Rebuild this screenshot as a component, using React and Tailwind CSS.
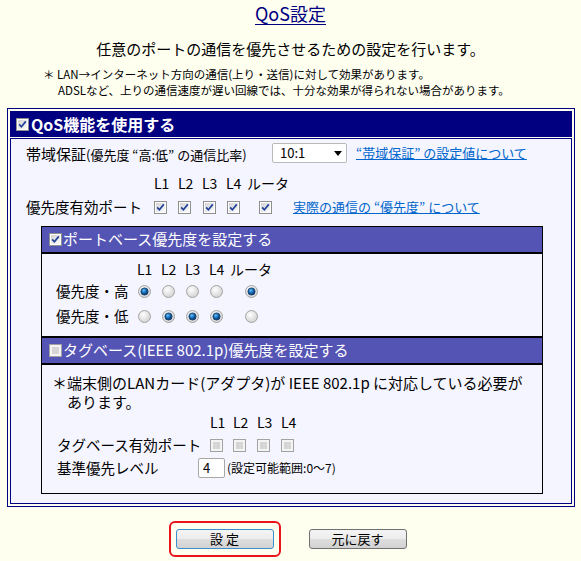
import React from 'react';

const Check = ({ on = true }) => (
  <svg width="13" height="13" viewBox="0 0 13 13" className="block shrink-0">
    <defs>
      <linearGradient id="cbBg" x1="0" y1="0" x2="1" y2="1">
        <stop offset="0" stopColor="#d2d2d2" />
        <stop offset="1" stopColor="#fcfcfc" />
      </linearGradient>
    </defs>
    <rect x="0.5" y="0.5" width="12" height="12" fill="#ffffff" stroke="#8e8f8f" />
    <rect x="2" y="2" width="9" height="9" fill="url(#cbBg)" />
    {on && <path d="M3.2 6.4 L5.4 8.8 L9.8 3.4" fill="none" stroke="#21409a" strokeWidth="1.7" />}
  </svg>
);

const OffCheck = () => (
  <svg width="13" height="13" viewBox="0 0 13 13" className="block shrink-0">
    <rect x="0.5" y="0.5" width="12" height="12" fill="#f4f4f4" stroke="#a2a2a2" />
    <rect x="3" y="3" width="7" height="7" fill="#d6d6d6" />
  </svg>
);

const Radio = ({ on }) => (
  <svg width="13" height="13" viewBox="0 0 13 13" className="block shrink-0">
    <defs>
      <radialGradient id="rBg" cx="0.4" cy="0.35" r="0.7">
        <stop offset="0" stopColor="#ffffff" />
        <stop offset="1" stopColor="#cfcfcf" />
      </radialGradient>
      <radialGradient id="rDot" cx="0.4" cy="0.35" r="0.7">
        <stop offset="0" stopColor="#6cc0f4" />
        <stop offset="0.5" stopColor="#1168b4" />
        <stop offset="1" stopColor="#0b2c58" />
      </radialGradient>
    </defs>
    <circle cx="6.5" cy="6.5" r="6" fill="url(#rBg)" stroke="#a4a4a4" />
    {on && <circle cx="6.5" cy="6.5" r="3.6" fill="url(#rDot)" stroke="#123a66" strokeWidth="0.8" />}
  </svg>
);

const PurpleBar = ({ on, children, className }) => (
  <div className={`flex items-center gap-[1px] bg-[#5454b4] pl-[7px] text-[15px] text-white ${className}`}>
    {on ? <Check /> : <OffCheck />}
    <span className="whitespace-nowrap">{children}</span>
  </div>
);

export default function App() {
  return (
    <div className="min-h-[561px] bg-[#fffff0] font-['Noto_Sans_CJK_JP',sans-serif] text-black">
      <div className="pt-[1px] text-center">
        <span className="text-[18px] leading-[24px] text-[#000080] underline underline-offset-[3px]">QoS設定</span>
      </div>
      <p className="mt-[12px] text-center text-[15px] leading-[22px]">任意のポートの通信を優先させるための設定を行います。</p>
      <div className="mt-[6px] pl-[43px] text-[11.5px] leading-[16px] whitespace-nowrap">
        <p>＊ LAN→インターネット方向の通信(上り・送信)に対して効果があります。</p>
        <p className="pl-[15px]">ADSLなど、上りの通信速度が遅い回線では、十分な効果が得られない場合があります。</p>
      </div>

      <div className="mt-[10px] ml-[7px] w-[568px] border border-[#000080] p-[2px]">
        <div className="flex h-[26px] items-center gap-[2px] bg-[#000080] pl-[6px] text-[16px] font-bold text-white">
          <Check />
          <span>QoS機能を使用する</span>
        </div>

        <div className="mt-[1px] border border-[#000080] bg-[#f5f5ff] pb-[9px]">
          {/* bandwidth row */}
          <div className="mt-[4px] flex h-[20px] items-center pl-[15px] whitespace-nowrap">
            <div className="w-[246px]">
              <span className="text-[15px]">帯域保証</span>
              <span className="text-[13px]">(優先度 “高:低” の通信比率)</span>
            </div>
            <div className="flex h-[20px] w-[75px] items-center justify-between rounded-[2px] border border-[#b9b9b9] bg-white pl-[7px] pr-[4px] text-[13px]">
              <span>10:1</span>
              <svg width="8" height="5" viewBox="0 0 8 5"><path d="M0 0 H8 L4 5 Z" fill="#000" /></svg>
            </div>
            <a href="#" className="ml-[9px] text-[13px] text-[#0066cc] underline">“帯域保証” の設定値について</a>
          </div>

          {/* port labels */}
          <div className="mt-[10px] flex h-[20px] items-center text-[14px] whitespace-nowrap">
            <div className="w-[143px]" />
            <div className="w-[24px]">L1</div>
            <div className="w-[24px]">L2</div>
            <div className="w-[24px]">L3</div>
            <div className="w-[21px]">L4</div>
            <div>ルータ</div>
          </div>

          <div className="mt-[4px] flex h-[20px] items-center whitespace-nowrap">
            <div className="w-[143px] pl-[15px] text-[14.5px]">優先度有効ポート</div>
            <div className="w-[24px]"><Check /></div>
            <div className="w-[24px]"><Check /></div>
            <div className="w-[24px] pl-[1px]"><Check /></div>
            <div className="w-[24px] pl-[1px]"><Check /></div>
            <div className="w-[40px] pl-[9px]"><Check /></div>
            <a href="#" className="ml-[3px] text-[13px] text-[#0066cc] underline">実際の通信の “優先度” について</a>
          </div>

          {/* inner box */}
          <div className="mt-[9px] ml-[30px] w-[502px] border border-black bg-[#f5f5ff]">
            <PurpleBar on className="h-[27px] border-b-2 border-black">ポートベース優先度を設定する</PurpleBar>

            <div className="pt-[5px] pb-[10px]">
              <div className="flex h-[20px] items-center text-[14px] whitespace-nowrap">
                <div className="w-[95px]" />
                <div className="w-[24px]">L1</div>
                <div className="w-[24px]">L2</div>
                <div className="w-[24px]">L3</div>
                <div className="w-[21px]">L4</div>
                <div>ルータ</div>
              </div>
              {[
                ['優先度・高', [true, false, false, false, true]],
                ['優先度・低', [false, true, true, true, false]],
              ].map(([label, vals], i) => (
                <div key={label} className={`flex h-[20px] items-center ${i === 0 ? 'mt-[2px]' : 'mt-[5px]'}`}>
                  <div className="w-[95px] pl-[14px] text-[14.5px] whitespace-nowrap">{label}</div>
                  {vals.slice(0, 4).map((v, j) => (
                    <div key={j} className="w-[24px] pl-[1px]"><Radio on={v} /></div>
                  ))}
                  <div className="ml-[12px]"><Radio on={vals[4]} /></div>
                </div>
              ))}
            </div>

            <PurpleBar on={false} className="h-[29px] border-y-2 border-black">タグベース(IEEE 802.1p)優先度を設定する</PurpleBar>

            <div className="pt-[8px] pb-[15px]">
              <div className="text-[15px] leading-[19px] whitespace-nowrap">
                <p className="pl-[10px]">＊端末側のLANカード(アダプタ)が IEEE 802.1p に対応している必要が</p>
                <p className="pl-[25px]">あります。</p>
              </div>
              <div className="mt-[1px] flex h-[20px] items-center text-[14px]">
                <div className="w-[168px]" />
                <div className="w-[23px]">L1</div>
                <div className="w-[24px]">L2</div>
                <div className="w-[24px]">L3</div>
                <div>L4</div>
              </div>
              <div className="mt-[3px] flex h-[20px] items-center">
                <div className="w-[168px] pl-[15px] text-[14.5px] whitespace-nowrap">タグベース有効ポート</div>
                <div className="w-[23px]"><OffCheck /></div>
                <div className="w-[24px]"><OffCheck /></div>
                <div className="w-[24px]"><OffCheck /></div>
                <div><OffCheck /></div>
              </div>
              <div className="mt-[3px] flex h-[20px] items-center whitespace-nowrap">
                <div className="w-[156px] pl-[15px] text-[14.5px]">基準優先レベル</div>
                <div className="flex h-[20px] w-[27px] items-center rounded-[2px] border border-[#a8a8a8] bg-white pl-[4px] text-[13px]">4</div>
                <span className="ml-[2px] text-[12px]">(設定可能範囲:0〜7)</span>
              </div>
            </div>
          </div>
        </div>
      </div>

      <div className="mt-[14px] flex items-center justify-center gap-[28px] pr-[6px]">
        <div className="rounded-[6px] border-2 border-[#e8141c] px-[5px] py-[6px]">
          <button className="flex h-[20px] w-[98px] items-center justify-center rounded-[3px] border border-[#3c8fce] bg-[linear-gradient(#f4f4f4,#ececec_50%,#dedede_50%,#d2d2d2)] text-[13px]">設 定</button>
        </div>
        <button className="flex h-[20px] w-[98px] items-center justify-center rounded-[3px] border border-[#707070] bg-[linear-gradient(#f4f4f4,#ececec_50%,#dedede_50%,#d2d2d2)] text-[13px]">元に戻す</button>
      </div>
    </div>
  );
}
